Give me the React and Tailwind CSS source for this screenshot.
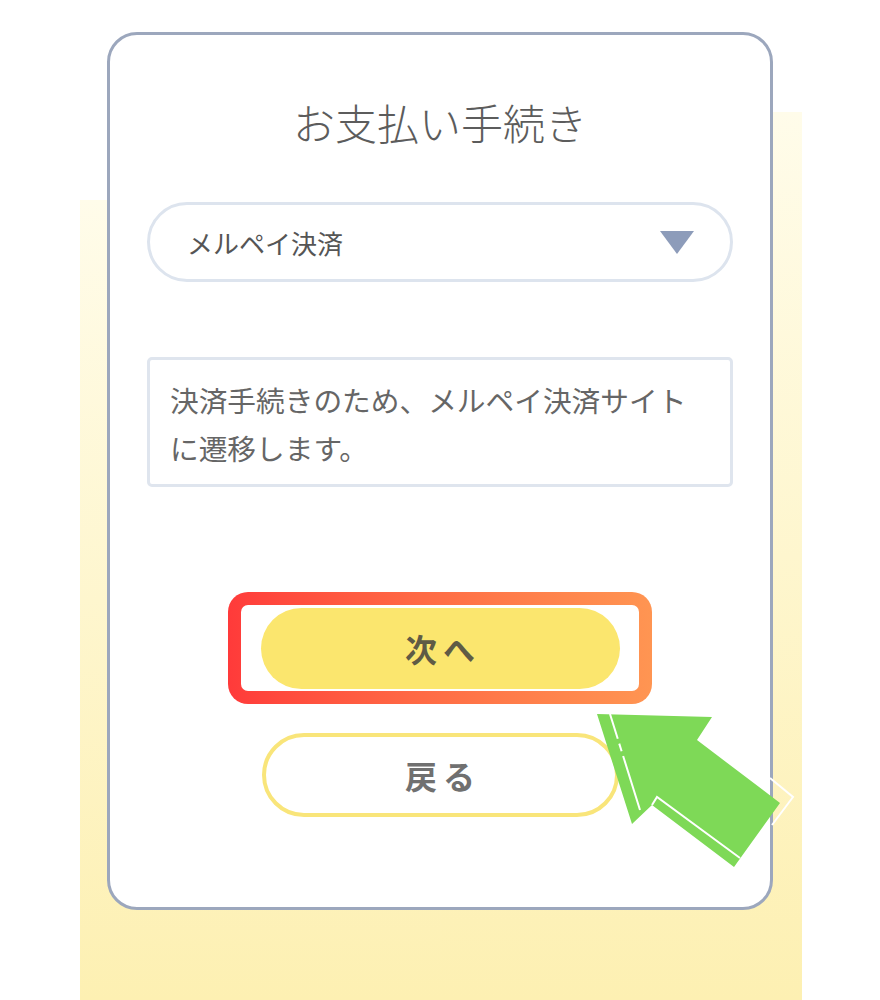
export default function App() {
  return (
    <div className="relative w-[880px] h-[1000px] overflow-hidden bg-white font-['Noto_Sans_CJK_JP',sans-serif]">
      {/* yellow backdrop */}
      <div className="ml-[80px] w-[722px] h-[1000px] pt-[32px] pl-[27px] [background:linear-gradient(to_bottom,transparent_200px,#fffcea_200px,#fdf0b2_100%)_left_top/50%_100%_no-repeat,linear-gradient(to_bottom,transparent_112px,#fffcea_112px,#fdf0b2_100%)_right_top/50%_100%_no-repeat]">
        {/* Card */}
        <div className="w-[666px] h-[878px] bg-white border-[3px] border-[#9ca7bd] rounded-[30px] flex flex-col items-center px-[37px]">
          <h1 className="mt-[57px] text-[42px] leading-[60px] text-[#5c5c5c] font-light">お支払い手続き</h1>

          {/* Select */}
          <div className="mt-[50px] w-full h-[80px] border-[3px] border-[#dde4ee] rounded-full flex items-center justify-between pl-[37px] pr-[36px]">
            <span className="text-[26px] text-[#555555]">メルペイ決済</span>
            <svg width="34" height="23" viewBox="0 0 34 23">
              <polygon points="0,0 34,0 17,23" fill="#8d9cba" />
            </svg>
          </div>

          {/* Notice */}
          <div className="mt-[75px] w-full h-[130px] border-[3px] border-[#dfe5ee] rounded-[5px] pl-[20px] pr-[40px] pt-[16px]">
            <p className="text-[28.7px] leading-[48px] text-[#666666]">決済手続きのため、メルペイ決済サイトに遷移します。</p>
          </div>

          {/* Next button with highlight */}
          <div className="mt-[105px] w-[424px] h-[112px] rounded-[20px] p-[13px] bg-gradient-to-r from-[#ff3a3a] to-[#ff9552]">
            <div className="w-full h-full bg-white rounded-[7px] flex items-center justify-center">
              <button className="w-[359px] h-[81px] rounded-full bg-[#fbe66e] text-[32px] font-bold text-[#5f5b45] tracking-[6px] pl-[6px]">次へ</button>
            </div>
          </div>

          <button className="mt-[29px] w-[357px] h-[84px] rounded-full border-4 border-[#f9e57a] bg-white text-[32px] font-bold text-[#707070] tracking-[6px] pl-[6px]">戻る</button>
        </div>
      </div>

      {/* Pointer arrow */}
      <svg className="absolute left-[590px] top-[705px]" width="212" height="170" viewBox="0 0 212 170">
        <polygon points="7,9 122,12 107,35 190,98 144,162 62,100 42,119" fill="#7ed957" />
        <line x1="20" y1="9" x2="50" y2="105" stroke="#ffffff" strokeWidth="2" strokeDasharray="26 5 8 5 100" />
        <polyline points="62,100 67,92 150,153" fill="none" stroke="#ffffff" strokeWidth="2" />
        <polyline points="180,73 203,92 182,120" fill="none" stroke="#ffffff" strokeWidth="2" />
      </svg>
    </div>
  );
}
